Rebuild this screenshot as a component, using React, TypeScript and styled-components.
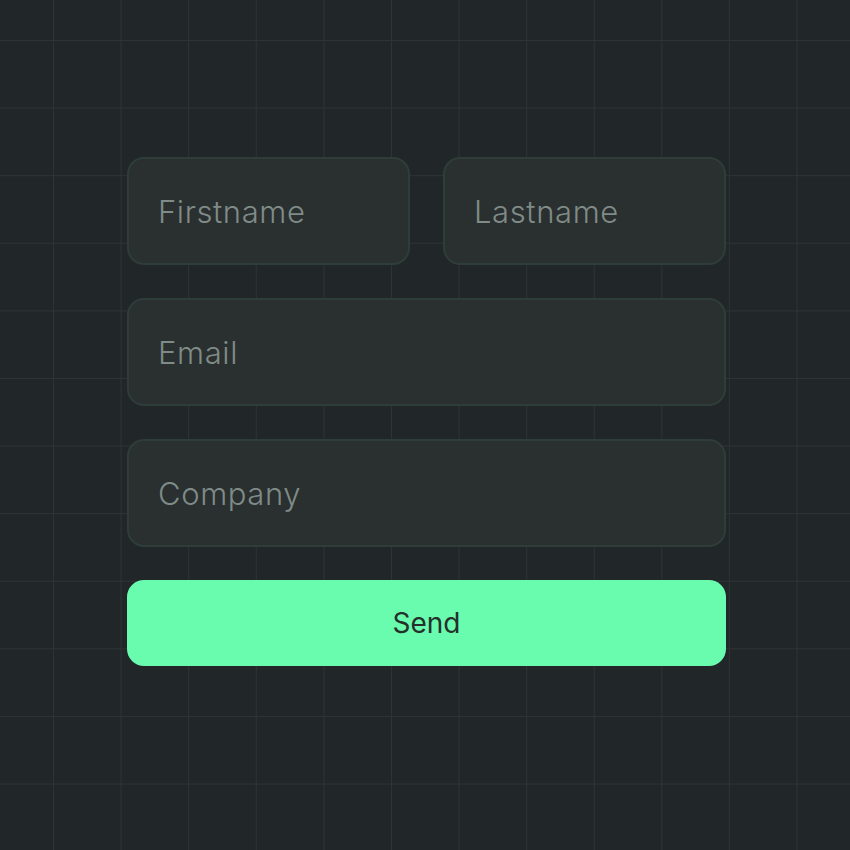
import React from 'react';
import styled, { createGlobalStyle } from 'styled-components';

const GlobalStyle = createGlobalStyle`
  html, body {
    margin: 0;
    padding: 0;
    background: #212629;
  }
  * {
    box-sizing: border-box;
  }
`;

const Page = styled.main`
  width: 850px;
  height: 850px;
  overflow: hidden;
  padding: 157px 0 0 127px;
  background-color: #212629;
  background-image:
    linear-gradient(to right, #2e3336 1px, transparent 1px),
    linear-gradient(to bottom, #2e3336 1px, transparent 1px);
  background-size: 67.6px 67.6px;
  background-position: 53px 40px;
  font-family: Inter, 'Noto Sans', sans-serif;
`;

const Form = styled.form`
  width: 599px;
  display: flex;
  flex-direction: column;
  gap: 33px;
`;

const Row = styled.div`
  display: grid;
  grid-template-columns: 1fr 1fr;
  gap: 33px;
`;

const Field = styled.input`
  width: 100%;
  height: 108px;
  padding: 0 29px;
  border: 2px solid #2f3d38;
  border-radius: 17px;
  background: #2a2f2f;
  color: #cfd6d3;
  font-family: inherit;
  font-size: 31px;
  font-weight: 300;
  letter-spacing: 0.6px;
  outline: none;

  &::placeholder {
    color: #7f8b87;
  }
`;

const SendButton = styled.button`
  height: 86px;
  border: none;
  border-radius: 17px;
  background: #69fcae;
  color: #25302b;
  font-family: inherit;
  font-size: 28px;
  font-weight: 400;
  cursor: pointer;
`;

const App: React.FC = () => (
  <>
    <GlobalStyle />
    <Page>
      <Form onSubmit={(e) => e.preventDefault()}>
        <Row>
          <Field placeholder="Firstname" />
          <Field placeholder="Lastname" />
        </Row>
        <Field placeholder="Email" />
        <Field placeholder="Company" />
        <SendButton type="submit">Send</SendButton>
      </Form>
    </Page>
  </>
);

export default App;
